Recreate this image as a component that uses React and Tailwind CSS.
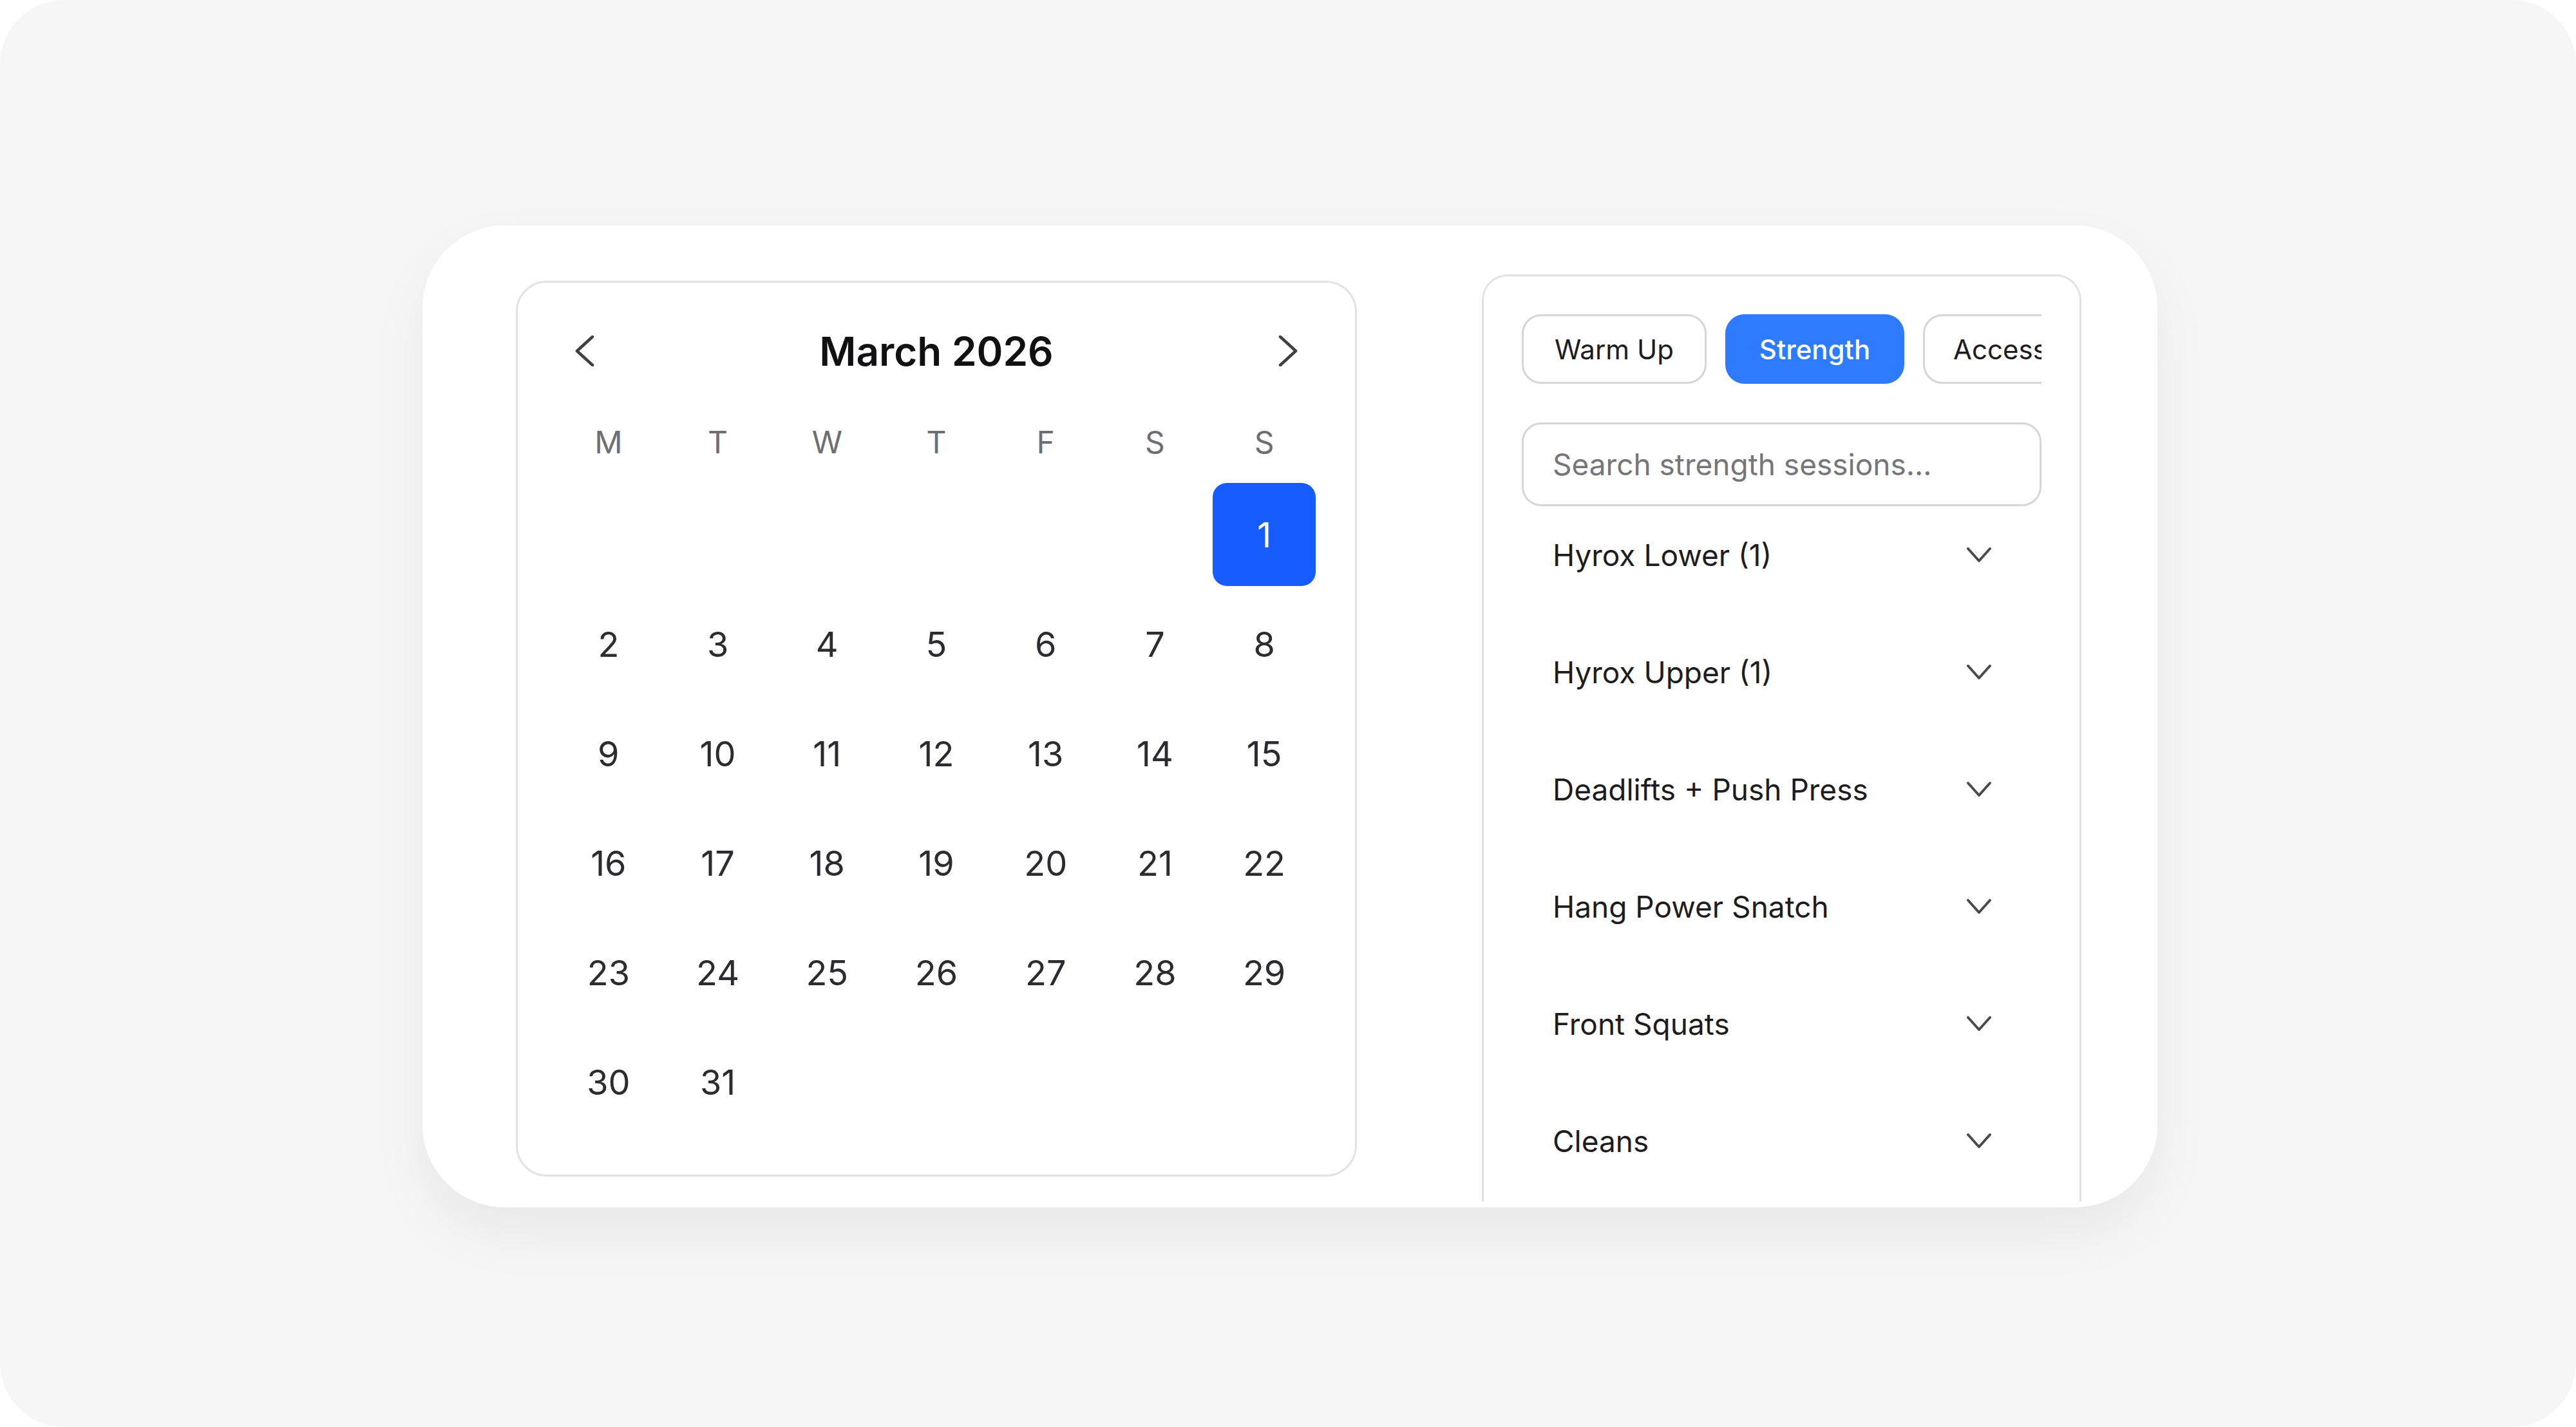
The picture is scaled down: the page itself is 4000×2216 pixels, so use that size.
import React from "react";

const Chevron = ({ dir }) => (
  <svg width="30" height="48" viewBox="0 0 30 48" fill="none">
    {dir === "left" ? (
      <polyline points="27,2 3,24 27,46" stroke="#3f3f44" strokeWidth="4.5" strokeLinecap="round" strokeLinejoin="round" />
    ) : (
      <polyline points="3,2 27,24 3,46" stroke="#3f3f44" strokeWidth="4.5" strokeLinecap="round" strokeLinejoin="round" />
    )}
  </svg>
);

const Down = () => (
  <svg width="40" height="26" viewBox="0 0 40 26" fill="none">
    <polyline points="3,3 20,22 37,3" stroke="#4a4a4f" strokeWidth="4" strokeLinecap="round" strokeLinejoin="round" />
  </svg>
);

const weekdays = ["M", "T", "W", "T", "F", "S", "S"];
const cells = [null, null, null, null, null, null, ...Array.from({ length: 31 }, (_, i) => i + 1)];
const items = [
  "Hyrox Lower (1)",
  "Hyrox Upper (1)",
  "Deadlifts + Push Press",
  "Hang Power Snatch",
  "Front Squats",
  "Cleans",
];

export default function App() {
  return (
    <div className="w-[4000px] h-[2216px] bg-white" style={{ fontFamily: "Inter, 'Noto Sans', sans-serif" }}>
      <div className="w-full h-full rounded-[100px] bg-[#f6f6f6] pt-[350px] pl-[656px]">
        <div className="w-[2694px] h-[1525px] bg-white rounded-[128px] overflow-hidden shadow-[0_40px_90px_rgba(0,0,0,0.06)] flex items-start pt-[76px] pl-[145px] gap-[194px]">
          {/* Calendar */}
          <div className="mt-[10px] w-[1306px] h-[1391px] border-[3px] border-[#e3e3e3] rounded-[48px] px-[61px] pt-[56px]">
            <div className="h-[100px] flex items-center justify-between px-[28px]">
              <Chevron dir="left" />
              <div className="text-[62px] font-semibold text-[#111114]">March 2026</div>
              <Chevron dir="right" />
            </div>
            <div className="mt-[56px] h-[60px] grid grid-cols-7 gap-x-[10px]">
              {weekdays.map((d, i) => (
                <div key={i} className="flex items-center justify-center text-[48px] text-[#6e6e73]">
                  {d}
                </div>
              ))}
            </div>
            <div className="mt-[39px] grid grid-cols-7 gap-[10px]">
              {cells.map((d, i) => (
                <div
                  key={i}
                  className={
                    d === 1
                      ? "h-[160px] flex items-center justify-center rounded-[22px] bg-[#175cff] text-white text-[54px]"
                      : "h-[160px] flex items-center justify-center text-[54px] text-[#2c2c30]"
                  }
                >
                  {d}
                </div>
              ))}
            </div>
          </div>

          {/* Right panel */}
          <div className="w-[931px] h-[1440px] border-t-[3px] border-x-[3px] border-[#e3e3e3] rounded-t-[40px] pt-[59px] px-[59px]">
            <div className="flex gap-[29px] overflow-hidden h-[108px]">
              <div className="shrink-0 w-[287px] h-[108px] border-[3px] border-[#d6d6d6] rounded-[30px] flex items-center justify-center text-[42px] text-[#1d1d1f]">
                Warm Up
              </div>
              <div className="shrink-0 w-[278px] h-[108px] bg-[#2f7bff] rounded-[30px] flex items-center justify-center text-[42px] text-white font-medium">
                Strength
              </div>
              <div className="shrink-0 w-[340px] h-[108px] border-[3px] border-[#d6d6d6] rounded-[30px] flex items-center pl-[44px] text-[42px] text-[#1d1d1f]">
                Accessories
              </div>
            </div>
            <div className="mt-[60px] h-[130px] border-[3px] border-[#d6d6d6] rounded-[30px] flex items-center px-[45px]">
              <input
                className="w-full outline-none bg-transparent text-[46px] text-[#1d1d1f] placeholder:text-[#75757a]"
                placeholder="Search strength sessions..."
                style={{ fontFamily: "Inter, 'Noto Sans', sans-serif" }}
              />
            </div>
            <div className="flex flex-col gap-[30px]">
              {items.map((t) => (
                <div key={t} className="h-[152px] flex items-center justify-between pl-[48px] pr-[77px]">
                  <span className="text-[46px] text-[#1d1d1f]">{t}</span>
                  <Down />
                </div>
              ))}
            </div>
          </div>
        </div>
      </div>
    </div>
  );
}
